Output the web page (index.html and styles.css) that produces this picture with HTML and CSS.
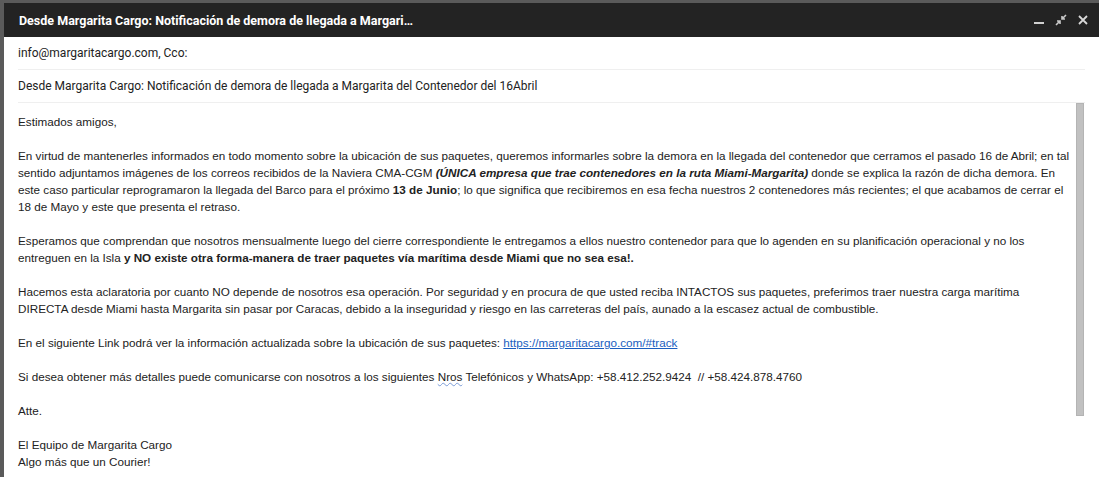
FILE: index.html
```html
<!DOCTYPE html>
<html lang="es">
<head>
<meta charset="utf-8">
<link rel="stylesheet" href="styles.css">
</head>
<body>
<div class="screen">
  <div class="compose">
    <div class="titlebar">
      <span class="title">Desde Margarita Cargo: Notificación de demora de llegada a Margari…</span>
      <div class="actions">
        <svg class="ic" width="12" height="12" viewBox="0 0 12 12"><rect x="1" y="8" width="10" height="2" fill="#d0d0d0"/></svg>
        <svg class="ic" width="12" height="12" viewBox="0 0 12 12"><path d="M11 1 L7 5 M7 2 V5 H10 M1 11 L5 7 M2 7 H5 V10" stroke="#c8c8c8" stroke-width="1.6" fill="none"/></svg>
        <svg class="ic" width="12" height="12" viewBox="0 0 12 12"><path d="M2 2 L10 10 M10 2 L2 10" stroke="#d8d8d8" stroke-width="1.8" fill="none"/></svg>
      </div>
    </div>
    <div class="field">info@margaritacargo.com, Cco:</div>
    <div class="field">Desde Margarita Cargo: Notificación de demora de llegada a Margarita del Contenedor del 16Abril</div>
    <div class="bodywrap">
      <div class="msg">
        <p>Estimados amigos,</p>
        <p>En virtud de mantenerles informados en todo momento sobre la ubicación de sus paquetes, queremos informarles sobre la demora en la llegada del contenedor que cerramos el pasado 16 de Abril; en tal sentido adjuntamos imágenes de los correos recibidos de la Naviera CMA-CGM <b><i>(ÚNICA empresa que trae contenedores en la ruta Miami-Margarita)</i></b> donde se explica la razón de dicha demora. En este caso particular reprogramaron la llegada del Barco para el próximo <b>13 de Junio</b>; lo que significa que recibiremos en esa fecha nuestros 2 contenedores más recientes; el que acabamos de cerrar el 18 de Mayo y este que presenta el retraso.</p>
        <p>Esperamos que comprendan que nosotros mensualmente luego del cierre correspondiente le entregamos a ellos nuestro contenedor para que lo agenden en su planificación operacional y no los entreguen en la Isla <b>y NO existe otra forma-manera de traer paquetes vía marítima desde Miami que no sea esa!.</b></p>
        <p>Hacemos esta aclaratoria por cuanto NO depende de nosotros esa operación. Por seguridad y en procura de que usted reciba INTACTOS sus paquetes, preferimos traer nuestra carga marítima DIRECTA desde Miami hasta Margarita sin pasar por Caracas, debido a la inseguridad y riesgo en las carreteras del país, aunado a la escasez actual de combustible.</p>
        <p>En el siguiente Link podrá ver la información actualizada sobre la ubicación de sus paquetes: <a class="link" href="#">https://margaritacargo.com/#track</a></p>
        <p>Si desea obtener más detalles puede comunicarse con nosotros a los siguientes <span class="spell">Nros</span> Telefónicos y WhatsApp: +58.412.252.9424&nbsp; // +58.424.878.4760</p>
        <p>Atte.</p>
        <p>El Equipo de Margarita Cargo<br>Algo más que un Courier!</p>
      </div>
      <div class="track"><div class="thumb"></div></div>
    </div>
  </div>
</div>
</body>
</html>
```

FILE: styles.css
```css
html, body {
  margin: 0;
  padding: 0;
  height: 100%;
  overflow: hidden;
}
.screen {
  background: #5a5a5a;
  height: 477px;
  padding: 3px 0 0 4px;
  box-sizing: border-box;
}
.compose {
  background: #fff;
  height: 100%;
  display: flex;
  flex-direction: column;
}
.titlebar {
  background: #232323;
  height: 34px;
  display: flex;
  align-items: center;
  justify-content: space-between;
  padding: 0 10px 0 15px;
  flex: none;
}
.title {
  color: #fff;
  font-family: Roboto, "Liberation Sans", sans-serif;
  font-weight: 700;
  font-size: 12.5px;
}
.actions {
  display: flex;
  align-items: center;
  gap: 10px;
}
.ic { display: block; }
.field {
  margin: 0 14px;
  height: 32px;
  line-height: 32px;
  border-bottom: 1px solid #efefef;
  font-family: Roboto, "Liberation Sans", sans-serif;
  font-size: 12px;
  color: #222;
  flex: none;
}
.bodywrap {
  display: flex;
  flex: 1;
  min-height: 0;
}
.msg {
  padding: 10px 0 0 14px;
  margin-right: 5px;
  font-family: Arial, "Liberation Sans", sans-serif;
  font-size: 11.7px;
  line-height: 17px;
  color: #222;
  width: 1053px;
  flex: none;
}
.msg p { margin: 0 0 17px; }
.link { color: #1a5ec0; text-decoration: underline; }
.spell { text-decoration: underline wavy #7a9bd6; text-decoration-thickness: 1px; }
.track {
  width: 9px;
}
.thumb {
  width: 8px;
  height: 313px;
  background: #c1c1c1;
  border: 1px solid #b4b4b4;
  box-sizing: border-box;
}
```
